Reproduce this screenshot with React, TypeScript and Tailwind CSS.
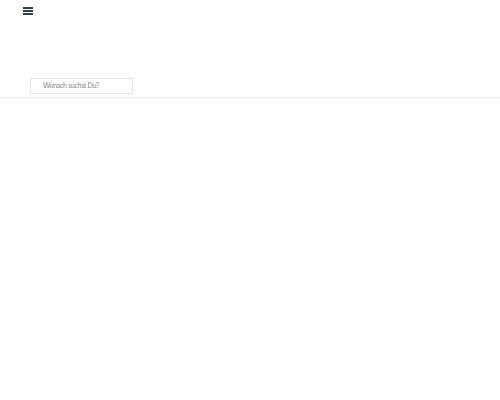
export default function App() {
  return (
    <div className="min-h-[400px] bg-white" style={{ fontFamily: 'Lato, "Liberation Sans", sans-serif' }}>
      <header className="border-b border-[#ececec]">
        <div className="px-[23px] pt-[7px]">
          <button className="flex w-[10px] flex-col gap-[1px]" aria-label="Menu">
            <span className="h-[2px] w-[10px] bg-[#2c3e57]" />
            <span className="h-[2px] w-[10px] bg-[#2c3e57]" />
            <span className="h-[2px] w-[10px] bg-[#2c3e57]" />
          </button>
        </div>
        <div className="pl-[30px] pt-[63px] pb-[3px]">
          <input
            type="text"
            placeholder="Wonach suchst Du?"
            className="block h-[16px] w-[103px] border border-[#e6e6e6] pb-[2px] pl-[12px] text-[7px] tracking-[-0.3px] text-[#555] outline-none placeholder:text-[#888]"
          />
        </div>
      </header>
    </div>
  )
}
